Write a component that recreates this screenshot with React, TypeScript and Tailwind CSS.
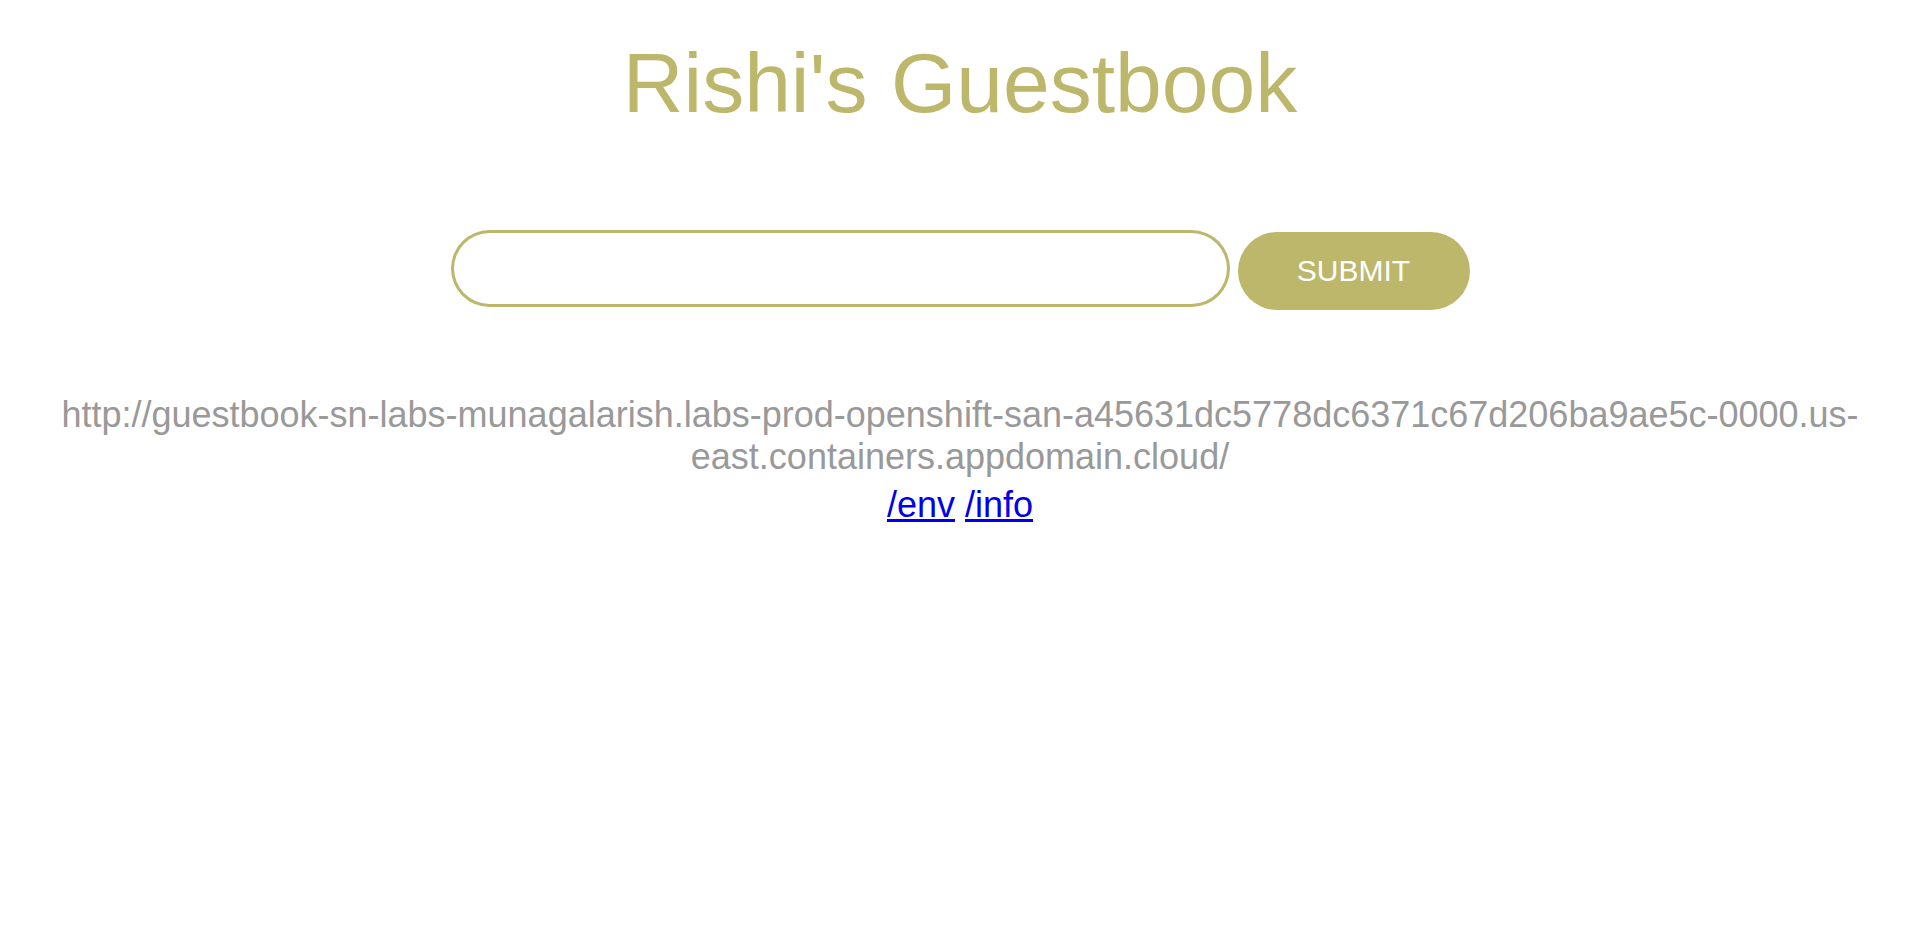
import { useState } from "react";

const khaki = "#BDB76B";

export default function App() {
  const [entry, setEntry] = useState("");

  return (
    <div className="min-h-screen bg-white text-center font-['Liberation_Sans',Arial,sans-serif] text-[#112233]">
      {/* Header */}
      <div className="pt-[35px]">
        <h1 className="m-0 text-[84px] font-light leading-[normal] text-[#BDB76B]">
          Rishi's Guestbook
        </h1>
      </div>

      {/* Entry form */}
      <form
        className="mx-auto mt-[98px] flex items-start justify-center gap-[8px]"
        onSubmit={(e) => e.preventDefault()}
      >
        <input
          value={entry}
          onChange={(e) => setEntry(e.target.value)}
          className="h-[77px] w-[779px] rounded-full border-0 px-[60px] text-[36px] leading-[normal] outline-none"
          style={{ boxShadow: `inset 0 0 0 3px ${khaki}` }}
        />
        <a
          href="#"
          className="mt-[2px] flex h-[78px] w-[232px] items-center justify-center rounded-full bg-[#BDB76B] text-[30px] font-normal uppercase leading-[normal] text-white no-underline"
        >
          Submit
        </a>
      </form>

      {/* Host info */}
      <h2 className="mt-[84px] text-[36px] font-light leading-[normal] text-[#999999]">
        http://guestbook-sn-labs-munagalarish.labs-prod-openshift-san-a45631dc5778dc6371c67d206ba9ae5c-0000.us-east.containers.appdomain.cloud/
      </h2>
      <p className="text-[36px] font-light leading-[1.5]">
        <a href="#" className="text-[#0000EE] underline">
          /env
        </a>{" "}
        <a href="#" className="text-[#0000EE] underline">
          /info
        </a>
      </p>
    </div>
  );
}
